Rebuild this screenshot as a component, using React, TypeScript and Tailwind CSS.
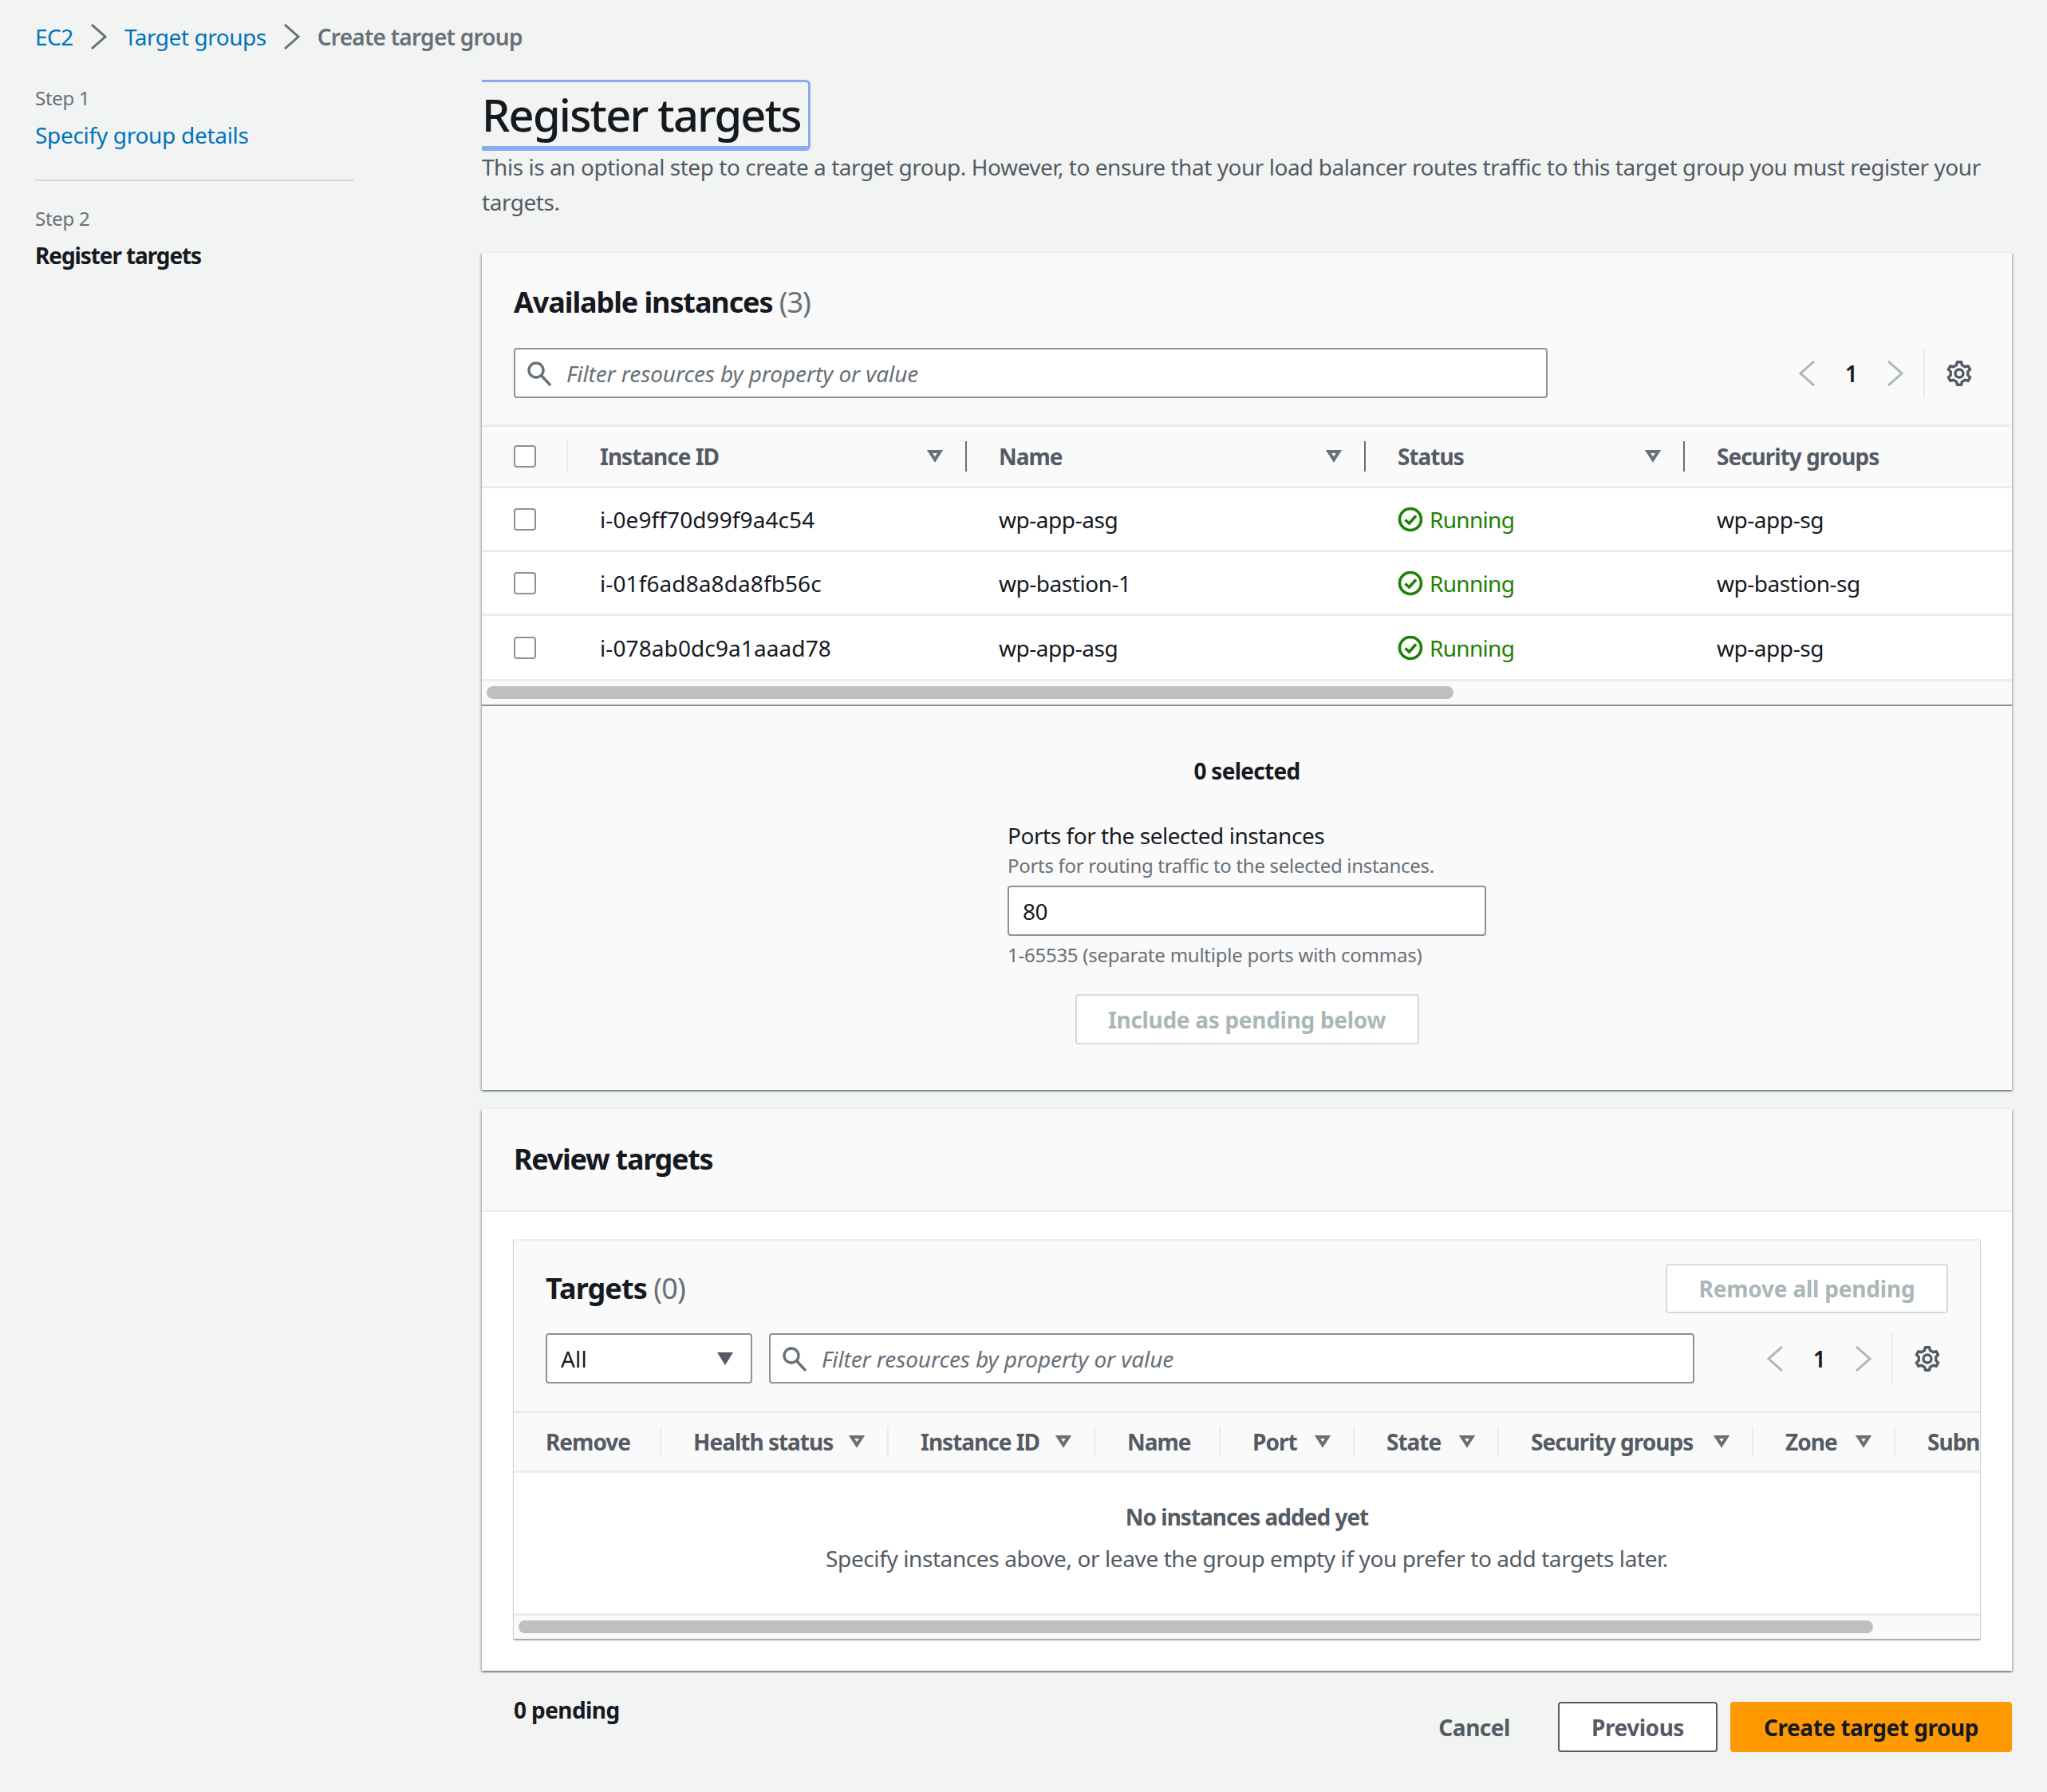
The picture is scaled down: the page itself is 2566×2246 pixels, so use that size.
function Chevron({ dir, color }: { dir: "l" | "r"; color: string }) {
  return (
    <svg width="32" height="32" viewBox="0 0 32 32" fill="none" stroke={color} strokeWidth="3" className="shrink-0">
      <path d={dir === "l" ? "M25 1 L8 16 L25 31" : "M7 1 L24 16 L7 31"} />
    </svg>
  );
}
function SortIcon() {
  return (
    <svg width="32" height="32" viewBox="0 0 32 32" fill="none" stroke="#687078" strokeWidth="4" className="shrink-0">
      <path d="M9.5 10 H22.5 L16 20 Z" strokeLinejoin="miter" />
    </svg>
  );
}
function SearchIcon() {
  return (
    <svg width="30" height="32" viewBox="0 0 30 32" fill="none" stroke="#687078" strokeWidth="3.4" className="shrink-0">
      <circle cx="11" cy="12" r="9" />
      <path d="M17.5 18.5 L29 31" />
    </svg>
  );
}
function StatusOk() {
  return (
    <svg width="32" height="32" viewBox="0 0 32 32" fill="none" stroke="#1d8102" strokeWidth="3.6" className="shrink-0">
      <circle cx="16" cy="16" r="13.5" />
      <path d="M9.5 16.5 L14.5 21 L23 11.5" />
    </svg>
  );
}
function gearPath() {
  const pts: string[] = [];
  const teeth = 6;
  const outer = 14.5;
  const inner = 11;
  for (let i = 0; i < teeth; i++) {
    const a = (i * 2 * Math.PI) / teeth - Math.PI / 2;
    const step = (2 * Math.PI) / teeth;
    [
      [-0.3, inner],
      [-0.17, outer],
      [0.17, outer],
      [0.3, inner],
    ].forEach(([f, r]) => {
      const t = a + f * step;
      pts.push(`${(18 + r * Math.cos(t)).toFixed(2)} ${(18 + r * Math.sin(t)).toFixed(2)}`);
    });
  }
  return "M" + pts.join(" L") + " Z";
}
function Gear() {
  return (
    <svg width="36" height="36" viewBox="0 0 36 36" fill="none" stroke="#545b64" strokeWidth="3.4" strokeLinejoin="round" className="shrink-0">
      <path d={gearPath()} />
      <circle cx="18" cy="18" r="5" />
    </svg>
  );
}
function Checkbox() {
  return <div className="h-[28px] w-[28px] shrink-0 rounded-[4px] border-2 border-[#879596] bg-white" />;
}
function FilterInput({ width }: { width: string }) {
  return (
    <div className={`flex h-[63px] items-center rounded-[4px] border-2 border-[#879596] bg-white pl-[15px] ${width}`}>
      <SearchIcon />
      <span className="ml-[19px] text-[28px] italic tracking-[-0.1px] text-[#687078]">Filter resources by property or value</span>
    </div>
  );
}
function Pager() {
  return (
    <div className="ml-auto flex h-[63px] items-center pr-[48px]">
      <Chevron dir="l" color="#aab7b8" />
      <span className="w-[79px] text-center text-[28px] font-semibold text-[#16191f]">1</span>
      <Chevron dir="r" color="#aab7b8" />
      <div className="ml-[19px] mr-[25px] h-full w-[2px] bg-[#eaeded]" />
      <Gear />
    </div>
  );
}
function Th({ w, label, sort, dark, last }: { w: string; label: string; sort?: boolean; dark?: boolean; last?: boolean }) {
  return (
    <div className={`shrink-0 ${w}`}>
      <div
        className={`flex h-[38px] items-center justify-between pl-[40px] pr-[22px] ${last ? "" : "border-r-2"} ${dark ? "border-[#687078]" : "border-[#eaeded]"}`}
      >
        <span className="whitespace-nowrap text-[28px] font-bold leading-[36px] tracking-[-1px] text-[#545b64]">{label}</span>
        {sort && <SortIcon />}
      </div>
    </div>
  );
}

const rows = [
  ["i-0e9ff70d99f9a4c54", "wp-app-asg", "wp-app-sg"],
  ["i-01f6ad8a8da8fb56c", "wp-bastion-1", "wp-bastion-sg"],
  ["i-078ab0dc9a1aaad78", "wp-app-asg", "wp-app-sg"],
];
const shadow = "shadow-[0_2px_2px_0_rgba(0,28,36,0.4),2px_1px_2px_0_rgba(0,28,36,0.16),-2px_1px_2px_0_rgba(0,28,36,0.16)]";
const innerShadow = "shadow-[0_2px_2px_0_rgba(0,28,36,0.3),1px_1px_1px_0_rgba(0,28,36,0.1),-1px_1px_1px_0_rgba(0,28,36,0.1)]";

export default function App() {
  return (
    <div className="h-[2246px] w-[2566px] overflow-hidden bg-[#f2f3f3] font-['Noto_Sans',sans-serif] tracking-[-0.46px] text-[#16191f]">
      <nav className="flex h-[92px] items-center pl-[44px] text-[28px]">
        <span className="text-[#0073bb]">EC2</span>
        <span className="mx-[16px]"><Chevron dir="r" color="#687078" /></span>
        <span className="text-[#0073bb]">Target groups</span>
        <span className="mx-[16px]"><Chevron dir="r" color="#687078" /></span>
        <span className="font-semibold tracking-[-0.75px] text-[#687078]">Create target group</span>
      </nav>

      <div className="flex">
        <aside className="w-[604px] shrink-0 pl-[44px]">
          <div className="mt-[13px] text-[24px] leading-[36px] tracking-[-0.3px] text-[#687078]">Step 1</div>
          <div className="mt-[6px] text-[28px] leading-[44px] tracking-[-0.3px] text-[#0073bb]">Specify group details</div>
          <div className="mt-[34px] h-[2px] w-[400px] bg-[#d5dbdb]" />
          <div className="mt-[29px] text-[24px] leading-[36px] tracking-[-0.3px] text-[#687078]">Step 2</div>
          <div className="mt-[6px] text-[28px] font-bold leading-[44px] tracking-[-1.1px] text-[#16191f]">Register targets</div>
        </aside>

        <main className="w-[1918px] shrink-0">
          <div className="mt-[8px] flex h-[89px] w-fit items-center rounded-r-[6px] border-t-[3px] border-r-[3px] border-b-[6px] border-[#8aabf3] pr-[9px]">
            <h1 className="text-[56px] font-medium leading-none tracking-[-1.8px] text-[#16191f]">Register targets</h1>
          </div>
          <p className="mb-[42px] -mt-[2px] text-[28px] leading-[44px] text-[#545b64]">
            This is an optional step to create a target group. However, to ensure that your load balancer routes traffic to this target group you must register your targets.
          </p>

          <section className={`bg-[#fafafa] ${shadow}`}>
            <div className="pl-[40px] pt-[38px] pb-[33px]">
              <h2 className="text-[36px] font-bold leading-[48px] tracking-[-1.1px]">
                Available instances <span className="font-normal text-[#687078]">(3)</span>
              </h2>
              <div className="mt-[33px] flex">
                <FilterInput width="w-[1296px]" />
                <Pager />
              </div>
            </div>
            <div className="flex h-[80px] items-center border-y-[3px] border-[#eaeded]">
              <div className="flex h-[38px] w-[108px] shrink-0 items-center border-r-2 border-[#eaeded] pl-[40px]">
                <Checkbox />
              </div>
              <Th w="w-[500px]" label="Instance ID" sort dark />
              <Th w="w-[500px]" label="Name" sort dark />
              <Th w="w-[400px]" label="Status" sort dark />
              <Th w="w-[400px]" label="Security groups" last />
            </div>
            {rows.map((r, i) => (
              <div
                key={r[0]}
                className={`flex items-center border-b-[3px] border-[#eaeded] bg-white text-[28px] ${i === 2 ? "h-[82px]" : "h-[80px]"}`}
              >
                <div className="w-[108px] shrink-0 pl-[40px]">
                  <div className="flex"><Checkbox /></div>
                </div>
                <div className="w-[500px] shrink-0 pl-[40px] tracking-[0.1px]">{r[0]}</div>
                <div className="w-[500px] shrink-0 pl-[40px]">{r[1]}</div>
                <div className="flex w-[400px] shrink-0 items-center gap-[8px] pl-[40px] tracking-[-0.7px] text-[#1d8102]">
                  <StatusOk />
                  Running
                </div>
                <div className="pl-[40px]">{r[2]}</div>
              </div>
            ))}
            <div className="h-[29px] pl-[6px] pt-[6px]">
              <div className="h-[16px] w-[1212px] rounded-full bg-[#bfbfbf]" />
            </div>
            <div className="h-[2px] bg-[#879596]" />
            <div className="pt-[59px] pb-[57px]">
              <div className="text-center text-[28px] font-bold leading-[44px] tracking-[-0.7px]">0 selected</div>
              <div className="mx-auto mt-[37px] w-[600px]">
                <div className="text-[28px] leading-[44px]">Ports for the selected instances</div>
                <div className="-mt-[2px] text-[24px] leading-[36px] tracking-[-0.3px] text-[#687078]">Ports for routing traffic to the selected instances.</div>
                <div className="mt-[7px] flex h-[63px] items-center rounded-[4px] border-2 border-[#879596] bg-white pl-[17px] text-[28px]">80</div>
                <div className="mt-[6px] text-[24px] leading-[36px] tracking-[-0.25px] text-[#687078]">1-65535 (separate multiple ports with commas)</div>
                <div className="mx-auto mt-[31px] flex h-[63px] w-[431px] items-center justify-center rounded-[4px] border-2 border-[#d5dbdb] bg-white text-[28px] font-bold tracking-[-0.3px] text-[#aab7b8]">
                  Include as pending below
                </div>
              </div>
            </div>
          </section>

          <section className={`mt-[24px] bg-white ${shadow}`}>
            <div className="flex h-[129px] items-center border-b-[2px] border-[#eaeded] bg-[#fafafa] pb-[2px] pl-[40px]">
              <h2 className="text-[36px] font-bold tracking-[-1.3px]">Review targets</h2>
            </div>
            <div className="px-[40px] pt-[34px] pb-[40px]">
              <div className={`bg-white ${innerShadow}`}>
                <div className="border-t-2 border-[#eaeded] bg-[#fafafa] pt-[29px] pl-[40px] pb-[34px]">
                  <div className="flex h-[62px] items-center justify-between pr-[40px]">
                    <h3 className="text-[36px] font-bold tracking-[-0.9px]">
                      Targets <span className="font-normal text-[#687078]">(0)</span>
                    </h3>
                    <div className="flex h-[62px] w-[354px] items-center justify-center rounded-[4px] border-2 border-[#d5dbdb] bg-white text-[28px] font-bold tracking-[-0.2px] text-[#aab7b8]">
                      Remove all pending
                    </div>
                  </div>
                  <div className="mt-[25px] flex">
                    <div className="flex h-[63px] w-[259px] items-center justify-between rounded-[4px] border-2 border-[#879596] bg-white pl-[17px] pr-[22px] text-[28px] tracking-[0.2px]">
                      All
                      <svg width="20" height="16" viewBox="0 0 20 16" className="shrink-0"><path d="M0 0 H20 L10 16 Z" fill="#545b64" /></svg>
                    </div>
                    <div className="ml-[21px]"><FilterInput width="w-[1160px]" /></div>
                    <Pager />
                  </div>
                </div>
                <div className="flex h-[78px] items-center overflow-hidden border-y-[3px] border-[#eaeded] bg-[#fafafa]">
                  <Th w="w-[185px]" label="Remove" />
                  <Th w="w-[285px]" label="Health status" sort />
                  <Th w="w-[259px]" label="Instance ID" sort />
                  <Th w="w-[157px]" label="Name" />
                  <Th w="w-[168px]" label="Port" sort />
                  <Th w="w-[181px]" label="State" sort />
                  <Th w="w-[319px]" label="Security groups" sort />
                  <Th w="w-[178px]" label="Zone" sort />
                  <Th w="w-[106px]" label="Subn" last />
                </div>
                <div className="flex h-[179px] flex-col items-center border-b-[3px] border-[#eaeded] pt-[33px] text-[28px] leading-[44px] tracking-[-0.4px] text-[#545b64]">
                  <div className="font-bold tracking-[-1px]">No instances added yet</div>
                  <div className="mt-[8px]">Specify instances above, or leave the group empty if you prefer to add targets later.</div>
                </div>
                <div className="h-[29px] bg-[#fafafa] pl-[6px] pt-[6px]">
                  <div className="h-[16px] w-[1698px] rounded-full bg-[#bfbfbf]" />
                </div>
              </div>
            </div>
          </section>

          <div className="mt-[39px] flex items-start pl-[40px]">
            <div className="mt-[-12px] text-[28px] font-bold leading-[44px] tracking-[-0.6px]">0 pending</div>
            <div className="ml-auto flex items-center">
              <span className="text-[28px] font-bold text-[#545b64]">Cancel</span>
              <div className="ml-[60px] flex h-[63px] w-[200px] items-center justify-center rounded-[4px] border-2 border-[#545b64] bg-white text-[28px] font-bold text-[#545b64]">
                Previous
              </div>
              <div className="ml-[16px] flex h-[63px] w-[353px] items-center justify-center rounded-[4px] bg-[#ff9900] text-[28px] font-bold text-[#16191f]">
                Create target group
              </div>
            </div>
          </div>
        </main>
      </div>
    </div>
  );
}
